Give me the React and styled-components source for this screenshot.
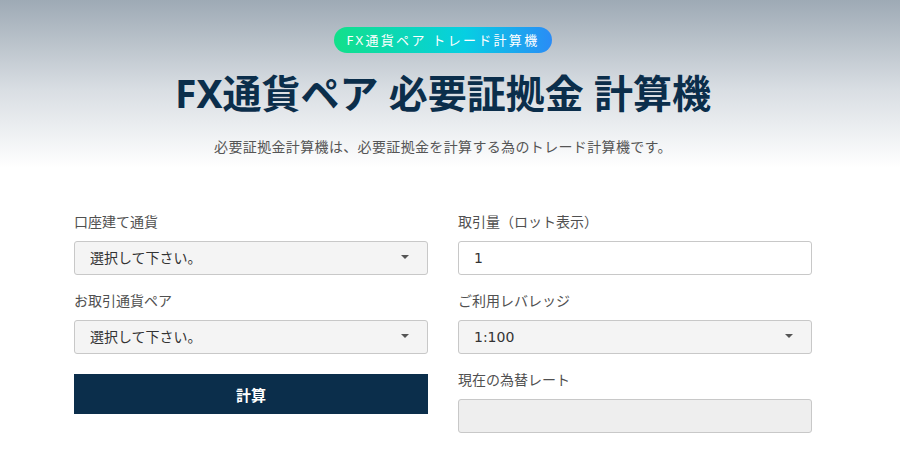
import React from 'react';
import styled, { createGlobalStyle } from 'styled-components';

const GlobalStyle = createGlobalStyle`
  body {
    margin: 0;
    background: #ffffff;
    font-family: "Noto Sans", "Noto Sans CJK JP", sans-serif;
    color: #444444;
  }
`;

const Hero = styled.header`
  background: linear-gradient(180deg, #9eaab5 0px, #d9dee3 90px, #ffffff 168px);
  padding: 27px 14px 10px 0;
  text-align: center;
`;

const Badge = styled.span`
  display: inline-block;
  height: 26px;
  line-height: 26px;
  padding: 0 13px;
  border-radius: 13px;
  background: linear-gradient(90deg, #12e08a 0%, #06cfe2 60%, #2a8cf6 100%);
  color: #ffffff;
  font-size: 13px;
  letter-spacing: 2.3px;
`;

const Title = styled.h1`
  margin: 15px 0 0;
  font-size: 39px;
  line-height: 50px;
  font-weight: 700;
  color: #0b2e4b;
  font-family: "Noto Sans", "Noto Sans CJK JP", sans-serif;
`;

const Lead = styled.p`
  margin: 19px 0 0;
  font-size: 14px;
  line-height: 20px;
  letter-spacing: 0.35px;
  color: #555555;
`;

const Form = styled.form`
  width: 738px;
  margin: 45px auto 0;
  padding-right: 14px;
  display: grid;
  grid-template-columns: 1fr 1fr;
  column-gap: 30px;
  box-sizing: content-box;
`;

const Column = styled.div`
  display: flex;
  flex-direction: column;
  gap: 16px;
`;

const Field = styled.div`
  display: flex;
  flex-direction: column;
  gap: 9px;
`;

const Label = styled.label`
  font-size: 14px;
  line-height: 20px;
  color: #505050;
`;

const SelectWrap = styled.div`
  position: relative;

  &::after {
    content: '';
    position: absolute;
    right: 19px;
    top: 14px;
    border-left: 4px solid transparent;
    border-right: 4px solid transparent;
    border-top: 4px solid #555555;
    pointer-events: none;
  }
`;

const Select = styled.select`
  appearance: none;
  width: 100%;
  height: 34px;
  box-sizing: border-box;
  padding: 0 15px;
  border: 1px solid #c8c8c8;
  border-radius: 3px;
  background: #f4f4f4;
  font-family: "DejaVu Sans", "Noto Sans CJK JP", sans-serif;
  font-size: 14px;
  color: #333333;
`;

const Input = styled.input`
  width: 100%;
  height: 34px;
  box-sizing: border-box;
  padding: 0 15px;
  border: 1px solid #c8c8c8;
  border-radius: 3px;
  background: ${(p) => (p.disabled ? '#eeeeee' : '#ffffff')};
  font-family: "DejaVu Sans", "Noto Sans CJK JP", sans-serif;
  font-size: 14px;
  color: #333333;
`;

const Button = styled.button`
  margin-top: 4px;
  height: 40px;
  border: none;
  background: #0b2e4b;
  color: #ffffff;
  font-family: "Noto Sans", "Noto Sans CJK JP", sans-serif;
  font-size: 15px;
  font-weight: 700;
  cursor: pointer;
`;

const SelectField = ({ label, value }) => (
  <Field>
    <Label>{label}</Label>
    <SelectWrap>
      <Select defaultValue={value}>
        <option value={value}>{value}</option>
      </Select>
    </SelectWrap>
  </Field>
);

const App = () => {
  return (
    <>
      <GlobalStyle />
      <Hero>
        <Badge>FX通貨ペア トレード計算機</Badge>
        <Title>FX通貨ペア 必要証拠金 計算機</Title>
        <Lead>必要証拠金計算機は、必要証拠金を計算する為のトレード計算機です。</Lead>
      </Hero>
      <Form onSubmit={(e) => e.preventDefault()}>
        <Column>
          <SelectField label="口座建て通貨" value="選択して下さい。" />
          <SelectField label="お取引通貨ペア" value="選択して下さい。" />
          <Button type="submit">計算</Button>
        </Column>
        <Column>
          <Field>
            <Label>取引量（ロット表示）</Label>
            <Input defaultValue="1" />
          </Field>
          <SelectField label="ご利用レバレッジ" value="1:100" />
          <Field>
            <Label>現在の為替レート</Label>
            <Input disabled />
          </Field>
        </Column>
      </Form>
    </>
  );
};

export default App;
